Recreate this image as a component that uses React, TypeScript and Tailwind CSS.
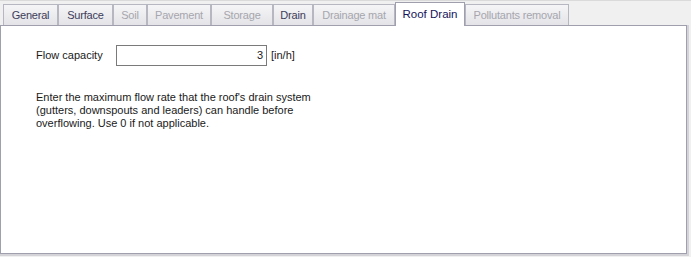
const tabs = [
  { label: 'General', w: 'w-[55px]', state: 'on' },
  { label: 'Surface', w: 'w-[55px]', state: 'on' },
  { label: 'Soil', w: 'w-[34px]', state: 'off' },
  { label: 'Pavement', w: 'w-[64px]', state: 'off' },
  { label: 'Storage', w: 'w-[62px]', state: 'off' },
  { label: 'Drain', w: 'w-[40px]', state: 'on' },
  { label: 'Drainage mat', w: 'w-[82px]', state: 'off' },
  { label: 'Roof Drain', w: 'w-[70px]', state: 'active' },
  { label: 'Pollutants removal', w: 'w-[104px]', state: 'off' },
]

export default function App() {
  return (
    <div className="w-[691px] h-[257px] bg-[#f0f0f0] font-['Liberation_Sans',Arial,sans-serif] text-[11px] overflow-hidden">
      <div className="h-[2px] border-t border-[#dadada]" />
      <div className="flex items-end h-[23px] pl-[3px] whitespace-nowrap">
        {tabs.map((tab) =>
          tab.state === 'active' ? (
            <div
              key={tab.label}
              className={`${tab.w} shrink-0 h-[24px] -mb-px relative z-10 bg-white border border-b-0 border-[#9f9fae] flex items-center justify-center text-[#14145a] text-[11.5px]`}
            >
              {tab.label}
            </div>
          ) : (
            <div
              key={tab.label}
              className={`${tab.w} shrink-0 h-[21px] bg-gradient-to-b from-[#f5f5f7] to-[#e4e4e8] border border-b-0 border-[#b7b7c2] flex items-center justify-center tracking-[-0.2px] ${
                tab.state === 'on' ? 'text-[#3c3c5a]' : 'text-[#a6a6ad]'
              }`}
            >
              {tab.label}
            </div>
          ),
        )}
      </div>
      <div className="w-[689px] h-[231px] border-r-2 border-b-2 border-[#d3d3d8]">
        <div className="w-[687px] h-[229px] bg-white border border-[#9f9fae] text-[#1a1a1a]">
          <div className="flex items-center pl-[35px] pt-[19px]">
            <span className="w-[80px]">Flow capacity</span>
            <div className="w-[151px] h-[21px] border border-[#7a7a7a] bg-white flex items-center justify-end pr-[3px]">
              3
            </div>
            <span className="ml-[4px]">[in/h]</span>
          </div>
          <p className="pl-[35px] pt-[25px] w-[320px] leading-[13px]">
            Enter the maximum flow rate that the roof's drain system (gutters, downspouts and leaders) can handle before overflowing. Use 0 if not applicable.
          </p>
        </div>
      </div>
    </div>
  )
}
